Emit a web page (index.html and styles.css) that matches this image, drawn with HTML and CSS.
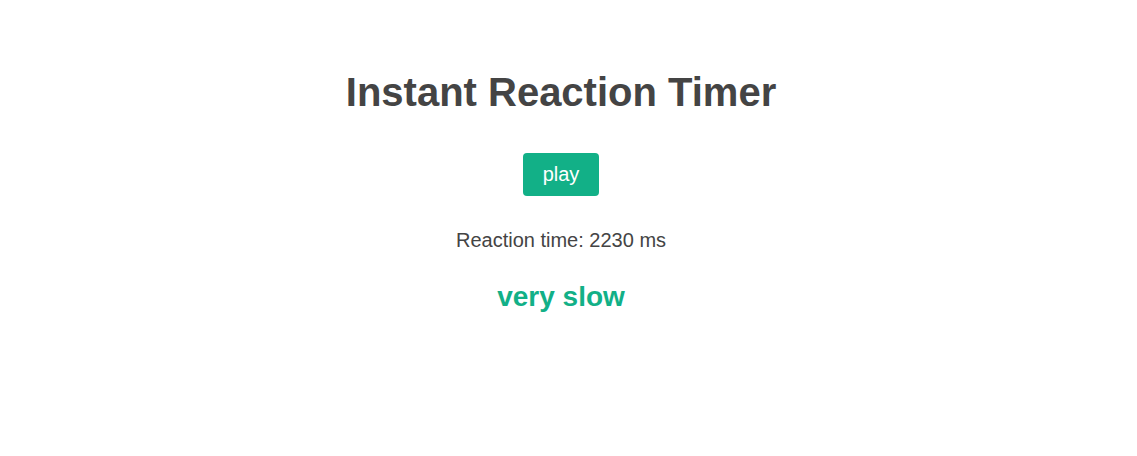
FILE: index.html
```html
<!DOCTYPE html>
<html>
<head>
<meta charset="utf-8">
<link rel="stylesheet" href="styles.css">
</head>
<body>
<div class="app">
  <h1 class="title">Instant Reaction Timer</h1>
  <button class="play">play</button>
  <p class="result">Reaction time: 2230 ms</p>
  <p class="rank">very slow</p>
</div>
</body>
</html>
```

FILE: styles.css
```css
body {
  margin: 0;
  font-family: "Liberation Sans", Arial, sans-serif;
  color: #444;
  background: #fff;
}
.app {
  display: flex;
  flex-direction: column;
  align-items: center;
  padding-top: 60px;
  padding-right: 15px;
}
.title {
  margin: 0;
  font-size: 40px;
  font-weight: bold;
  color: #444;
  line-height: 64px;
}
.play {
  margin-top: 29px;
  background: #12b087;
  color: #fff;
  border: none;
  border-radius: 4px;
  font-family: "Liberation Sans", Arial, sans-serif;
  font-size: 20px;
  width: 76px;
  height: 43px;
  padding: 0;
}
.result {
  margin: 30px 0 0;
  font-size: 20px;
  line-height: 28px;
}
.rank {
  margin: 25px 0 0;
  font-size: 28px;
  font-weight: bold;
  color: #12b087;
  line-height: 36px;
}
```
